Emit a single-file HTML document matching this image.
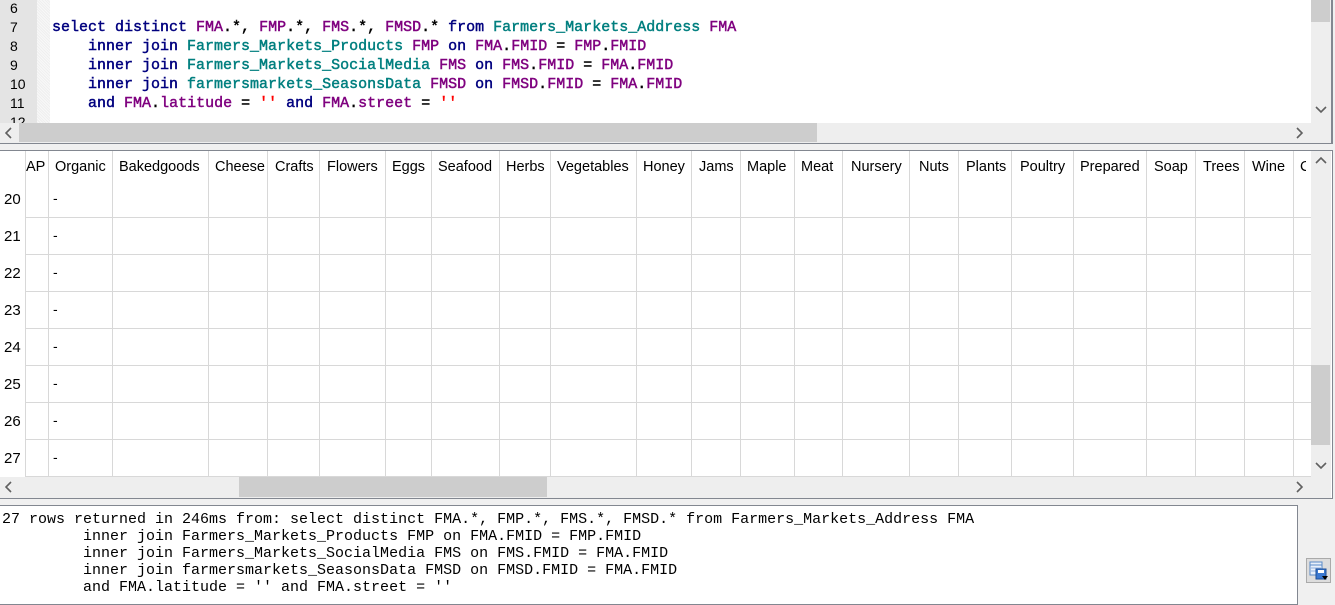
<!DOCTYPE html>
<html><head><style>
*{margin:0;padding:0;box-sizing:border-box}
body{width:1335px;height:597px;background:#f0f0f0;position:relative;overflow:hidden;font-family:"Liberation Sans",sans-serif}
.abs{position:absolute}
.code{font-family:"Liberation Mono",monospace;font-size:15px;font-weight:normal;-webkit-text-stroke:0.45px currentColor;white-space:pre;line-height:19px}
.k{color:#00007f}.t{color:#007f7f}.a{color:#7f007f}.s{color:#ff0000}.p{color:#000}
.ln{font-size:14px;color:#000;line-height:19px}
.hdr{font-size:14.5px;color:#000;top:159px}
.rn{font-size:15px;left:4px}
.vl{position:absolute;top:151px;width:1px;height:326px;background:#d8d8d8}
.hl{position:absolute;left:26px;width:1285px;height:1px;background:#d8d8d8}
.dash{position:absolute;left:53px;font-size:14px}
.msg{font-family:"Liberation Mono",monospace;font-size:15px;white-space:pre;line-height:17px;color:#000}
svg.c{position:absolute}
</style></head><body>
<!-- editor -->
<div class="abs" style="left:0;top:0;width:1311px;height:123px;background:#fff"></div>
<div class="abs" style="left:0;top:0;width:37px;height:123px;background:#e4e4e4"></div>
<div class="abs" style="left:37px;top:0;width:13px;height:123px;background:repeating-linear-gradient(45deg,#efefef 0 1px,#f8f8f8 1px 2px)"></div>
<div class="abs ln" style="left:10px;top:-1px">6<br>7<br>8<br>9<br>10<br>11<br>12</div>
<div class="abs code" style="left:52px;top:18px"><span class="k">select distinct </span><span class="a">FMA</span>.*, <span class="a">FMP</span>.*, <span class="a">FMS</span>.*, <span class="a">FMSD</span>.* <span class="k">from </span><span class="t">Farmers_Markets_Address</span> <span class="a">FMA</span>
    <span class="k">inner join </span><span class="t">Farmers_Markets_Products</span> <span class="a">FMP</span> <span class="k">on </span><span class="a">FMA</span>.<span class="a">FMID</span> = <span class="a">FMP</span>.<span class="a">FMID</span>
    <span class="k">inner join </span><span class="t">Farmers_Markets_SocialMedia</span> <span class="a">FMS</span> <span class="k">on </span><span class="a">FMS</span>.<span class="a">FMID</span> = <span class="a">FMA</span>.<span class="a">FMID</span>
    <span class="k">inner join </span><span class="t">farmersmarkets_SeasonsData</span> <span class="a">FMSD</span> <span class="k">on </span><span class="a">FMSD</span>.<span class="a">FMID</span> = <span class="a">FMA</span>.<span class="a">FMID</span>
    <span class="k">and </span><span class="a">FMA</span>.<span class="a">latitude</span> = <span class="s">''</span> <span class="k">and </span><span class="a">FMA</span>.<span class="a">street</span> = <span class="s">''</span></div>
<div class="abs" style="left:1311px;top:0;width:20px;height:123px;background:#eee"></div>
<div class="abs" style="left:1311px;top:0;width:19px;height:22px;background:#cdcdcd"></div>
<svg class="c" style="left:1315px;top:106px" width="12" height="8"><polyline points="1,1 6,6 11,1" fill="none" stroke="#606060" stroke-width="1.6"/></svg>
<div class="abs" style="left:0;top:123px;width:1331px;height:20px;background:#eee"></div>
<div class="abs" style="left:19px;top:123px;width:798px;height:19px;background:#cdcdcd"></div>
<svg class="c" style="left:5px;top:127px" width="8" height="12"><polyline points="6,1 1,6 6,11" fill="none" stroke="#606060" stroke-width="1.6"/></svg>
<svg class="c" style="left:1296px;top:127px" width="8" height="12"><polyline points="1,1 6,6 1,11" fill="none" stroke="#606060" stroke-width="1.6"/></svg>
<div class="abs" style="left:1331px;top:0;width:2px;height:144px;background:#828790"></div>
<div class="abs" style="left:0;top:143px;width:1333px;height:1px;background:#828790"></div>
<!-- grid -->
<div class="abs" style="left:0;top:150px;width:1333px;height:349px;border:1px solid #828790;border-left:none;background:#fff"></div>
<div class="vl" style="left:25px"></div><div class="vl" style="left:48px"></div><div class="vl" style="left:112px"></div><div class="vl" style="left:208px"></div><div class="vl" style="left:267px"></div><div class="vl" style="left:319px"></div><div class="vl" style="left:385px"></div><div class="vl" style="left:431px"></div><div class="vl" style="left:499px"></div><div class="vl" style="left:550px"></div><div class="vl" style="left:636px"></div><div class="vl" style="left:691px"></div><div class="vl" style="left:740px"></div><div class="vl" style="left:794px"></div><div class="vl" style="left:842px"></div><div class="vl" style="left:909px"></div><div class="vl" style="left:958px"></div><div class="vl" style="left:1011px"></div><div class="vl" style="left:1073px"></div><div class="vl" style="left:1146px"></div><div class="vl" style="left:1195px"></div><div class="vl" style="left:1244px"></div><div class="vl" style="left:1293px"></div>
<div class="hl" style="top:217px"></div><div class="hl" style="top:254px"></div><div class="hl" style="top:291px"></div><div class="hl" style="top:328px"></div><div class="hl" style="top:365px"></div><div class="hl" style="top:402px"></div><div class="hl" style="top:439px"></div><div class="hl" style="top:476px"></div>
<div class="abs hdr" style="left:26px">AP</div>
<div class="abs hdr" style="left:55px">Organic</div>
<div class="abs hdr" style="left:119px">Bakedgoods</div>
<div class="abs hdr" style="left:215px">Cheese</div>
<div class="abs hdr" style="left:275px">Crafts</div>
<div class="abs hdr" style="left:327px">Flowers</div>
<div class="abs hdr" style="left:392px">Eggs</div>
<div class="abs hdr" style="left:438px">Seafood</div>
<div class="abs hdr" style="left:506px">Herbs</div>
<div class="abs hdr" style="left:557px">Vegetables</div>
<div class="abs hdr" style="left:643px">Honey</div>
<div class="abs hdr" style="left:699px">Jams</div>
<div class="abs hdr" style="left:747px">Maple</div>
<div class="abs hdr" style="left:801px">Meat</div>
<div class="abs hdr" style="left:851px">Nursery</div>
<div class="abs hdr" style="left:919px">Nuts</div>
<div class="abs hdr" style="left:966px">Plants</div>
<div class="abs hdr" style="left:1020px">Poultry</div>
<div class="abs hdr" style="left:1080px">Prepared</div>
<div class="abs hdr" style="left:1154px">Soap</div>
<div class="abs hdr" style="left:1203px">Trees</div>
<div class="abs hdr" style="left:1252px">Wine</div>
<div class="abs hdr" style="left:1300px;width:6px;overflow:hidden">C</div>
<div class="abs rn" style="top:191px">20</div><div class="abs rn" style="top:228px">21</div><div class="abs rn" style="top:265px">22</div><div class="abs rn" style="top:302px">23</div><div class="abs rn" style="top:339px">24</div><div class="abs rn" style="top:376px">25</div><div class="abs rn" style="top:413px">26</div><div class="abs rn" style="top:450px">27</div>
<div class="dash" style="top:190px">-</div><div class="dash" style="top:227px">-</div><div class="dash" style="top:264px">-</div><div class="dash" style="top:301px">-</div><div class="dash" style="top:338px">-</div><div class="dash" style="top:375px">-</div><div class="dash" style="top:412px">-</div><div class="dash" style="top:449px">-</div>
<div class="abs" style="left:1311px;top:151px;width:20px;height:326px;background:#eee"></div>
<div class="abs" style="left:1311px;top:365px;width:19px;height:80px;background:#cdcdcd"></div>
<svg class="c" style="left:1315px;top:156px" width="12" height="8"><polyline points="1,7 6,2 11,7" fill="none" stroke="#606060" stroke-width="1.6"/></svg>
<svg class="c" style="left:1315px;top:462px" width="12" height="8"><polyline points="1,1 6,6 11,1" fill="none" stroke="#606060" stroke-width="1.6"/></svg>
<div class="abs" style="left:0;top:477px;width:1331px;height:21px;background:#eee"></div>
<div class="abs" style="left:239px;top:477px;width:308px;height:20px;background:#cdcdcd"></div>
<svg class="c" style="left:5px;top:481px" width="8" height="12"><polyline points="6,1 1,6 6,11" fill="none" stroke="#606060" stroke-width="1.6"/></svg>
<svg class="c" style="left:1296px;top:481px" width="8" height="12"><polyline points="1,1 6,6 1,11" fill="none" stroke="#606060" stroke-width="1.6"/></svg>
<!-- message -->
<div class="abs" style="left:-1px;top:505px;width:1299px;height:100px;background:#fff;border:1px solid #828790"></div>
<div class="abs msg" style="left:2px;top:511px">27 rows returned in 246ms from: select distinct FMA.*, FMP.*, FMS.*, FMSD.* from Farmers_Markets_Address FMA
         inner join Farmers_Markets_Products FMP on FMA.FMID = FMP.FMID
         inner join Farmers_Markets_SocialMedia FMS on FMS.FMID = FMA.FMID
         inner join farmersmarkets_SeasonsData FMSD on FMSD.FMID = FMA.FMID
         and FMA.latitude = '' and FMA.street = ''</div>
<div class="abs" style="left:1306px;top:558px;width:25px;height:25px;border:1px solid #aaa;background:#ddd"></div>
<svg class="abs" style="left:1309px;top:561px" width="20" height="20" viewBox="0 0 20 20">
<rect x="1" y="1" width="12" height="13" fill="#e8f0fa" stroke="#5a8ac8"/>
<line x1="1" y1="4" x2="13" y2="4" stroke="#5a8ac8"/><line x1="2" y1="7" x2="12" y2="7" stroke="#8fb0e0"/><line x1="2" y1="10" x2="12" y2="10" stroke="#8fb0e0"/>
<rect x="7" y="8" width="10" height="10" fill="#3a78d0" stroke="#1d4f99"/>
<rect x="9" y="9" width="6" height="3" fill="#fff"/>
<polygon points="13,15 19,15 16,19" fill="#000"/>
</svg>
</body></html>
